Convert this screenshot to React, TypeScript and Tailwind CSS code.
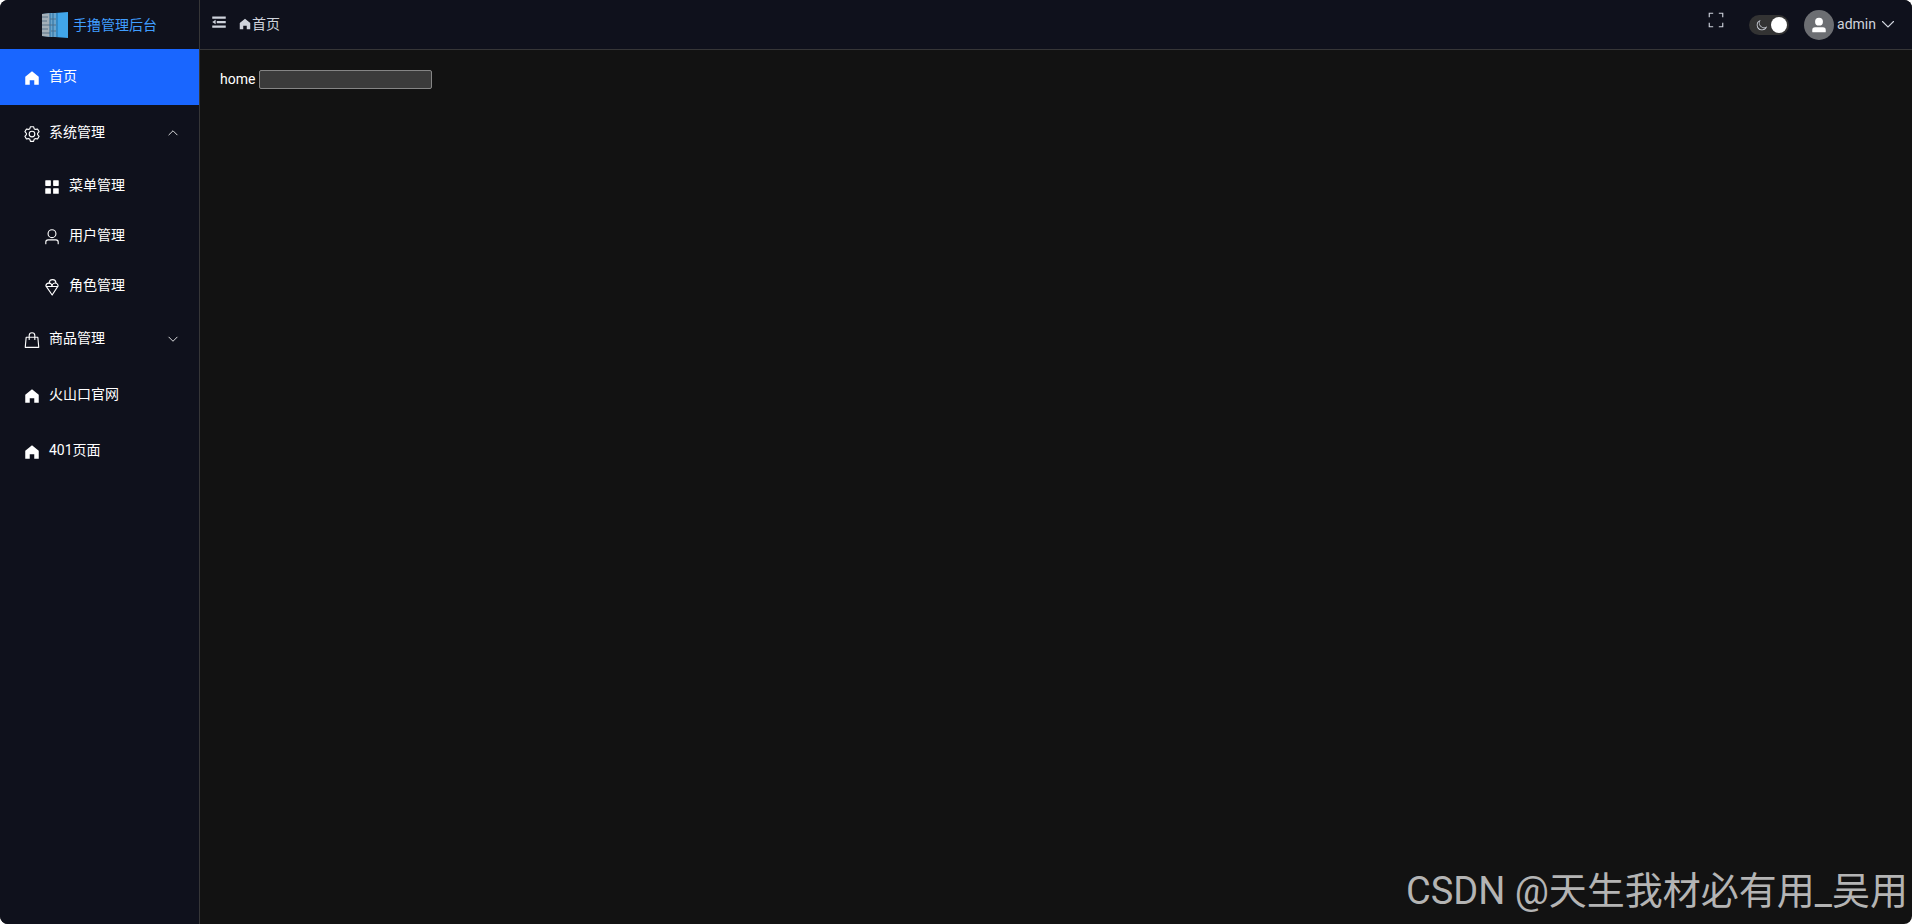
import type { ReactNode } from "react";

const Icon = ({ className, children }: { className: string; children: ReactNode }) => (
  <svg className={`shrink-0 ${className}`} viewBox="0 0 1024 1024" fill="currentColor" aria-hidden="true">
    {children}
  </svg>
);

const homeIcon = <path d="M512 128 128 447.936V896h255.936V640H640v256h255.936V447.936z" />;

const settingIcon = (
  <path d="M600.704 64a32 32 0 0 1 30.464 22.208l35.2 109.376c14.784 7.232 28.928 15.36 42.432 24.512l112.384-24.192a32 32 0 0 1 34.432 15.36L944.32 364.8a32 32 0 0 1-4.032 37.504l-77.12 85.12a357.12 357.12 0 0 1 0 49.024l77.12 85.248a32 32 0 0 1 4.032 37.504l-88.704 153.6a32 32 0 0 1-34.432 15.296L708.8 803.904c-13.44 9.088-27.648 17.28-42.368 24.512l-35.264 109.376A32 32 0 0 1 600.704 960H423.296a32 32 0 0 1-30.464-22.208L357.696 828.48a351.616 351.616 0 0 1-42.56-24.64l-112.32 24.256a32 32 0 0 1-34.432-15.36L79.68 659.2a32 32 0 0 1 4.032-37.504l77.12-85.248a357.12 357.12 0 0 1 0-48.896l-77.12-85.248A32 32 0 0 1 79.68 364.8l88.704-153.6a32 32 0 0 1 34.432-15.296l112.32 24.256c13.568-9.152 27.776-17.408 42.56-24.64l35.2-109.312A32 32 0 0 1 423.232 64H600.64zm-23.424 64H446.72l-36.352 113.088-24.512 11.968a294.113 294.113 0 0 0-34.816 20.096l-22.656 15.36-116.224-25.088-65.28 113.152 79.68 88.192-1.92 27.136a293.12 293.12 0 0 0 0 40.192l1.92 27.136-79.808 88.192 65.344 113.152 116.224-25.024 22.656 15.296a294.113 294.113 0 0 0 34.816 20.096l24.512 11.968L446.72 896h130.688l36.48-113.152 24.448-11.904a288.282 288.282 0 0 0 34.752-20.096l22.592-15.296 116.288 25.024 65.28-113.152-79.744-88.192 1.92-27.136a293.12 293.12 0 0 0 0-40.256l-1.92-27.136 79.808-88.128-65.344-113.152-116.288 24.96-22.592-15.232a287.616 287.616 0 0 0-34.752-20.096l-24.448-11.904L577.344 128zM512 320a192 192 0 1 1 0 384 192 192 0 0 1 0-384m0 64a128 128 0 1 0 0 256 128 128 0 0 0 0-256" />
);

const menuIcon = (
  <path d="M160 128h256a32 32 0 0 1 32 32v256a32 32 0 0 1-32 32H160a32 32 0 0 1-32-32V160a32 32 0 0 1 32-32m448 0h256a32 32 0 0 1 32 32v256a32 32 0 0 1-32 32H608a32 32 0 0 1-32-32V160a32 32 0 0 1 32-32M160 576h256a32 32 0 0 1 32 32v256a32 32 0 0 1-32 32H160a32 32 0 0 1-32-32V608a32 32 0 0 1 32-32m448 0h256a32 32 0 0 1 32 32v256a32 32 0 0 1-32 32H608a32 32 0 0 1-32-32V608a32 32 0 0 1 32-32" />
);

const userIcon = (
  <path d="M512 512a192 192 0 1 0 0-384 192 192 0 0 0 0 384m0 64a256 256 0 1 1 0-512 256 256 0 0 1 0 512m320 320v-96a96 96 0 0 0-96-96H288a96 96 0 0 0-96 96v96a32 32 0 1 1-64 0v-96a160 160 0 0 1 160-160h448a160 160 0 0 1 160 160v96a32 32 0 1 1-64 0" />
);

const roleIcon = (
  <path d="M128.64 448a208 208 0 0 1 193.536-191.552 224 224 0 0 1 445.248 15.488A208.128 208.128 0 0 1 894.784 448H896L548.8 983.68a32 32 0 0 1-53.248.704L128 448zm64.256 0h286.208a144 144 0 0 0-286.208 0zm351.36 0h286.272a144 144 0 0 0-286.272 0zm-294.848 64 271.808 396.608L778.24 512H249.408zM511.68 352.64a207.872 207.872 0 0 1 189.184-96.192 160 160 0 0 0-314.752 5.632c52.608 12.992 97.28 46.08 125.568 90.56" />
);

const goodsIcon = (
  <g fill="none" stroke="currentColor" strokeWidth="64" strokeLinejoin="round" strokeLinecap="round">
    <path d="M180 352h664l52 576H128z" />
    <path d="M352 480V256a160 160 0 0 1 320 0v224" />
  </g>
);

type MenuItem = { title: string; icon: ReactNode; active?: boolean; children?: MenuItem[]; open?: boolean };

const menus: MenuItem[] = [
  { title: "首页", icon: homeIcon, active: true },
  {
    title: "系统管理",
    icon: settingIcon,
    open: true,
    children: [
      { title: "菜单管理", icon: menuIcon },
      { title: "用户管理", icon: userIcon },
      { title: "角色管理", icon: roleIcon },
    ],
  },
  { title: "商品管理", icon: goodsIcon, open: false, children: [] },
  { title: "火山口官网", icon: homeIcon },
  { title: "401页面", icon: homeIcon },
];

const Arrow = ({ up, className }: { up?: boolean; className: string }) => (
  <Icon className={className}>
    <path
      d={up ? "M160 672 512 320l352 352" : "M160 352l352 352 352-352"}
      fill="none"
      stroke="currentColor"
      strokeWidth="72"
      strokeLinecap="round"
    />
  </Icon>
);

const MenuLabel = ({ item }: { item: MenuItem }) => (
  <>
    <Icon className="mt-1 mr-2 w-[18px] h-[18px]">{item.icon}</Icon>
    <span>{item.title}</span>
  </>
);

const Sidebar = () => (
  <aside className="w-[200px] shrink-0 border-r border-[#363637] bg-[#0f111c] text-white">
    <div className="flex items-center justify-center h-[49px] text-[#409eff]">
      <svg className="w-[26px] h-[26px] mr-[5px]" viewBox="0 0 26 26" aria-hidden="true">
        <path d="M0 2 26 0v26L0 24z" fill="#41a6ea" />
        <path d="M0 2 8 1v24l-8-1z" fill="#a3afb8" />
        <path d="M8 1h6v24H8z" fill="#6aa5cc" />
        <path d="M0 5h6M0 9h5M0 13h8M0 17h6M0 21h8M8 7h6M8 13h6M9 19h5" stroke="#5b7386" fill="none" />
        <path d="M8 1v24M11 1v24M15 1v24" stroke="#2b6f9f" fill="none" />
      </svg>
      <span>手撸管理后台</span>
    </div>
    <nav>
      {menus.map((item) => (
        <div key={item.title}>
          {item.children ? (
            <button className="flex items-center w-full h-14 pl-[23px] pr-5 pb-0.5" aria-expanded={item.open}>
              <MenuLabel item={item} />
              <Arrow up={item.open} className="w-3 h-3 mt-0.5 ml-auto" />
            </button>
          ) : (
            <a href="#" className={`flex items-center h-14 pl-[23px] pb-0.5 ${item.active ? "bg-[#1966ff]" : ""}`}>
              <MenuLabel item={item} />
            </a>
          )}
          {item.children?.map((child) => (
            <a key={child.title} href="#" className="flex items-center h-[50px] pl-[43px] pb-0.5">
              <MenuLabel item={child} />
            </a>
          ))}
        </div>
      ))}
    </nav>
  </aside>
);

const Header = () => (
  <header className="flex items-center justify-between h-[50px] border-b border-[#363637] bg-[#0f111c] text-[#cfd3dc]">
    <div className="flex items-center pl-2.5 pb-0.5">
      <button className="mr-2.5 mb-1" aria-label="折叠菜单">
        <Icon className="w-[18px] h-[18px]">
          <path d="M896 192H128v128h768zm0 256H384v128h512zm0 256H128v128h768zM320 384 128 512l192 128z" />
        </Icon>
      </button>
      <a href="#" className="flex items-center">
        <Icon className="w-3.5 h-3.5">{homeIcon}</Icon>
        首页
      </a>
    </div>
    <div className="flex items-center pr-4">
      <button className="mr-6 mb-2.5" aria-label="全屏">
        <Icon className="w-[18px] h-[18px]">
          <path
            d="M128 352V128h224M672 128h224v224M896 672v224H672M352 896H128V672"
            fill="none"
            stroke="currentColor"
            strokeWidth="64"
          />
        </Icon>
      </button>
      <button role="switch" aria-checked="true" aria-label="暗黑模式" className="flex items-center justify-between w-10 h-5 pl-[7px] pr-0.5 mr-[15px] rounded-full bg-[#333333]">
        <Icon className="w-3 h-3">
          <path d="M240.448 240.448a384 384 0 1 0 559.424 525.696 448 448 0 0 1-542.016-542.08 390.592 390.592 0 0 0-17.408 16.384m181.056 362.048a384 384 0 0 0 525.632 16.384A448 448 0 1 1 405.056 76.8a384 384 0 0 0 16.448 525.696" />
        </Icon>
        <span className="w-4 h-4 rounded-full bg-white" />
      </button>
      <button className="flex items-center">
        <span className="flex items-center justify-center w-[30px] h-[30px] mr-[3px] rounded-full bg-[#6c6e72] text-white">
          <Icon className="w-[18px] h-[18px]">
            <path d="M288 320a224 224 0 1 0 448 0 224 224 0 1 0-448 0m544 608H160a32 32 0 0 1-32-32v-96a160 160 0 0 1 160-160h448a160 160 0 0 1 160 160v96a32 32 0 0 1-32 32z" />
          </Icon>
        </span>
        <span className="pb-0.5">admin</span>
        <Arrow className="w-4 h-4 ml-1 mb-0.5" />
      </button>
    </div>
  </header>
);

export default function App() {
  return (
    <div className="bg-white">
      <div className="flex relative min-h-screen overflow-hidden rounded-lg bg-[#121212] text-sm text-white font-[Roboto,'Noto_Sans_CJK_SC',sans-serif]">
        <Sidebar />
        <div className="flex-1">
          <Header />
          <main className="flex items-center gap-1 px-5 py-[19px]">
            <label htmlFor="home">home</label>
            <input id="home" type="text" className="w-[173px] h-[19px] px-1 border border-[#858585] rounded-xs bg-[#3b3b3b]" />
          </main>
        </div>
        <p className="absolute right-1 bottom-[7px] text-[38px] leading-[52px] text-[#b4b4b4]">CSDN @天生我材必有用_吴用</p>
      </div>
    </div>
  );
}
